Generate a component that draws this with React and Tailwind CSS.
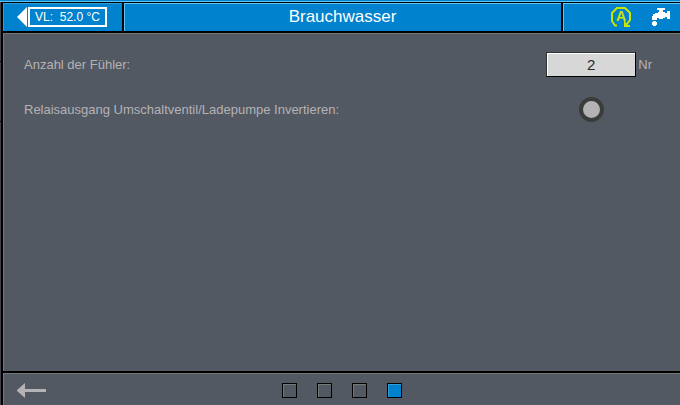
import { useState } from "react";

const pages = [1, 2, 3, 4];

const AutoIcon = () => (
    <svg width="22" height="22" viewBox="0 0 22 22" fill="none" stroke="#c8e600" strokeWidth="2" aria-hidden="true">
        <path d="M7 19.5H5L2 15V7L7 2H15L20 7V14L17 18" />
        <path d="M14 14V21H20V19H18Z" fill="#c8e600" stroke="none" />
        <text x="11" y="15" textAnchor="middle" fill="#c8e600" stroke="none" fontSize="14" fontWeight="700">A</text>
    </svg>
);

const TapIcon = () => (
    <svg width="18" height="18" viewBox="0 0 18 18" fill="#ffffff" shapeRendering="crispEdges" aria-hidden="true">
        <path d="M5 0H13V2H11V4H13V5H15V3H18V11H15V9H13V10H11V11H7V10H5V12H0V8H1V6H3V5H6V4H7V2H5Z" />
        <path d="M1 13H4V14H5V17H4V18H1V17H0V14H1Z" />
    </svg>
);

const App = () => {
    const [sensors, setSensors] = useState("2");
    const [inverted, setInverted] = useState(false);
    const [page, setPage] = useState(4);

    return (
        <div className="flex h-screen flex-col bg-[#525963] font-['Liberation_Sans',Arial,sans-serif] text-[13px] text-[#b5b2b5]">
            <div className="h-[2px] shrink-0 border-b border-[#63c3ef] bg-[#0082ce]" />

            <div className="flex min-h-0 flex-1">
                {/* Edge of the menu behind the panel */}
                <div className="flex w-[3px] shrink-0 flex-col border-r-2 border-black bg-[#42414a]">
                    <div className="h-[60px] border-b border-black" />
                    <div className="h-[60px] border-b border-black" />
                </div>

                <div className="flex min-w-0 flex-1 flex-col">
                    {/* Header */}
                    <header className="flex h-[31px] shrink-0 border-y border-b-2 border-black bg-[#0082ce] text-white">
                        <div className="flex w-[119px] shrink-0 items-center pl-[14px] shadow-[inset_1px_1px_0_#319ed6]">
                            <button type="button" className="flex items-center text-[12px]">
                                <svg width="10" height="20" viewBox="0 0 10 20" fill="#ffffff" aria-hidden="true">
                                    <path d="M10 0V20L0 10Z" />
                                </svg>
                                <span className="ml-px flex h-5 w-[79px] items-center justify-center whitespace-pre border-2 border-white">
                                    VL:  52.0 °C
                                </span>
                            </button>
                        </div>
                        <div className="w-[2px] shrink-0 bg-black" />
                        <h1 className="flex flex-1 items-center justify-center text-[17px] shadow-[inset_1px_1px_0_#63c3ef]">
                            Brauchwasser
                        </h1>
                        <div className="w-[2px] shrink-0 bg-black" />
                        <div className="flex w-[117px] shrink-0 items-center justify-end gap-5 pr-[10px] shadow-[inset_1px_1px_0_#63c3ef]">
                            <AutoIcon />
                            <TapIcon />
                        </div>
                    </header>

                    {/* Settings */}
                    <main className="flex-1 border-l border-t border-[#737973] pl-5 pr-7 pt-[18px]">
                        <div className="flex h-[25px] items-center">
                            <label htmlFor="sensors" className="flex-1">Anzahl der Fühler:</label>
                            <input
                                id="sensors"
                                type="text"
                                value={sensors}
                                onChange={(e) => setSensors(e.target.value)}
                                className="h-[25px] w-[90px] border border-b-black border-l-[#313431] border-r-black border-t-[#313431] bg-[#d6d7d6] text-center text-[15px] text-[#292829] shadow-[inset_1px_1px_0_#ffffff]"
                            />
                            <span className="ml-[2px]">Nr</span>
                        </div>
                        <div className="mt-5 flex h-[25px] items-center">
                            <label htmlFor="inverted" className="flex-1">
                                Relaisausgang Umschaltventil/Ladepumpe Invertieren:
                            </label>
                            <input
                                id="inverted"
                                type="checkbox"
                                checked={inverted}
                                onChange={(e) => setInverted(e.target.checked)}
                                className="mr-12 size-[25px] appearance-none rounded-full border-4 border-[#393c39] bg-[#b5b2b5] checked:bg-[#0082ce]"
                            />
                        </div>
                    </main>

                    {/* Footer */}
                    <footer className="h-[34px] shrink-0 border-t-2 border-black">
                        <div className="grid h-full grid-cols-[1fr_auto_1fr] items-center border-l border-t border-[#737973] px-[13px] pt-px">
                            <button type="button" aria-label="Zurück" className="w-fit">
                                <svg width="29" height="15" viewBox="0 0 29 15" fill="#b5b2b5" className="block" aria-hidden="true">
                                    <path d="M8 0V6H29V9H8V15L0 8V7Z" />
                                </svg>
                            </button>
                            <nav className="flex gap-5">
                                {pages.map((number) => (
                                    <button
                                        key={number}
                                        type="button"
                                        aria-label={`Seite ${number}`}
                                        onClick={() => setPage(number)}
                                        className={`size-[15px] border border-black ${
                                            page === number
                                                ? "bg-[#0082ce] shadow-[inset_1px_1px_0_#319ed6]"
                                                : "bg-[#525963] shadow-[inset_1px_1px_0_#737973]"
                                        }`}
                                    />
                                ))}
                            </nav>
                        </div>
                    </footer>
                </div>
            </div>
        </div>
    );
};

export default App;
